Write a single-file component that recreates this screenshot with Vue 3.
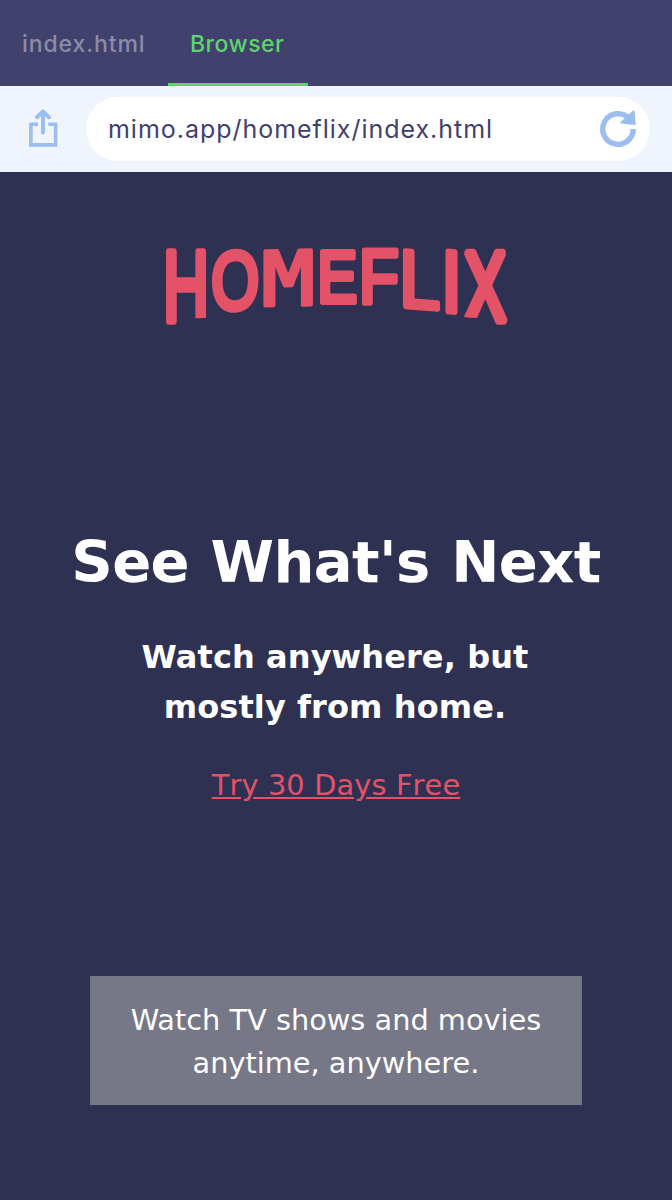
<script setup>
// Glyph extents are in font units (2048 per em); each box is the letter's place in the wordmark.
const stroke = 4.8
const letters = [
  { ch: 'H', g: [168, 1311], x: [166, 206], y: [249, 325], skew: 0, clip: 'url(#h-foot)' },
  { ch: 'O', g: [97, 1495], x: [212, 258.5], y: [249.5, 312], skew: -0.04 },
  { ch: 'M', g: [86, 1145], x: [263.5, 313], y: [248.8, 307], skew: -0.02, wide: true },
  { ch: 'E', g: [168, 1278], x: [320, 357], y: [248.8, 305], skew: 0 },
  { ch: 'F', g: [168, 1150], x: [362, 398], y: [248.5, 306], skew: 0 },
  { ch: 'L', g: [168, 1078], x: [403, 440.5], y: [249.5, 310.5], skew: 0.08 },
  { ch: 'I', g: [189, 380], x: [445.5, 457.5], y: [248.8, 314.5], skew: 0.08 },
  { ch: 'X', g: [46, 1321], x: [463, 507], y: [249.4, 325], skew: 0, clip: 'url(#x-foot)' },
].map((l) => {
  const u = 100 / 2048
  const sw = l.ch === 'X' ? 6 : l.wide ? 4 : stroke
  const a = (l.x[1] - l.x[0] - sw) / ((l.g[1] - l.g[0]) * u)
  const line = sw / a
  const cap = l.wide ? 72.9 : 68.8
  const d = (l.y[1] - l.y[0]) / (cap + line)
  const b = l.skew * a
  const mid = ((l.g[0] + l.g[1]) / 2) * u
  const e = l.x[0] + sw / 2 - l.g[0] * u * a
  const f = l.y[1] - (line * d) / 2 - b * mid
  return { ch: l.ch, clip: l.clip, wide: l.wide, line, m: `matrix(${a} ${b} 0 ${d} ${e} ${f})` }
})
</script>

<template>
  <div class="screen">
    <nav class="tabs">
      <div class="tab file">index.html</div>
      <div class="tab active"><span>Browser</span></div>
    </nav>
    <div class="toolbar">
      <svg class="share" width="30" height="40" viewBox="28 109 30 40">
        <path d="M38 124.2H30.9V144.9H55.6V124.2H48.2" fill="none" stroke="#9bbdf0" stroke-width="3.6" />
        <path d="M43 132.5V112M37 117.2L43 111.4L49 117.2" fill="none" stroke="#9bbdf0" stroke-width="4" stroke-linecap="round" stroke-linejoin="round" />
      </svg>
      <div class="address">
        <span class="url">mimo.app/homeflix/index.html</span>
        <svg class="reload" width="38" height="40" viewBox="599 109 38 40">
          <path d="M633.3 129A15.3 15.3 0 1 1 629.4 118.8" fill="none" stroke="#9bbdf0" stroke-width="5.4" />
          <path d="M633.6 111.4L634.8 124L621.4 122.6Z" fill="#9bbdf0" stroke="#9bbdf0" stroke-width="2" stroke-linejoin="round" />
        </svg>
      </div>
    </div>
    <main class="page">
      <svg class="logo" width="344" height="80" viewBox="165 247 344 80">
        <defs>
          <clipPath id="h-foot"><path d="M160 240H215V317.6L190 318.5V323L172 330H160Z" /></clipPath>
          <clipPath id="x-foot"><path d="M455 240H515V330H498L486 318.5L455 316.5Z" /></clipPath>
        </defs>
        <g v-for="l in letters" :key="l.ch" :clip-path="l.clip">
          <text class="letter" :class="{ wide: l.wide }" :transform="l.m" :stroke-width="l.line">{{ l.ch }}</text>
        </g>
      </svg>
      <h1>See What's Next</h1>
      <h2>Watch anywhere, but<br />mostly from home.</h2>
      <a class="trial">Try 30 Days Free</a>
      <p class="note">Watch TV shows and movies<br />anytime, anywhere.</p>
    </main>
  </div>
</template>

<style>
body {
  margin: 0;
  background: #2f3152;
}
</style>

<style scoped>
.screen {
  width: 672px;
  height: 1200px;
  overflow: hidden;
  background: #2f3152;
  display: flex;
  flex-direction: column;
}
.tabs {
  height: 86px;
  box-sizing: border-box;
  background: #41416e;
  display: flex;
  font: 500 23px/88px Inter, sans-serif;
}
.tab {
  box-sizing: border-box;
  height: 86px;
  white-space: nowrap;
}
.file {
  width: 168px;
  padding-left: 22px;
  letter-spacing: 0.9px;
  color: #8b8ca6;
}
.active {
  width: 140px;
  padding-left: 22px;
  color: #5fd46c;
  letter-spacing: 0.5px;
  border-bottom: 3px solid #5fd46c;
}
.toolbar {
  height: 86px;
  box-sizing: border-box;
  padding: 0 22px 0 28px;
  background: #f0f5fd;
  display: flex;
  align-items: center;
}
.share {
  margin-right: 28px;
  flex: none;
}
.address {
  flex: 1;
  height: 64px;
  box-sizing: border-box;
  padding: 0 13px 0 22px;
  border-radius: 32px;
  background: #fff;
  display: flex;
  align-items: center;
  justify-content: space-between;
}
.url {
  font: 400 25px/64px Inter, sans-serif;
  letter-spacing: 0.97px;
  color: #41416e;
  white-space: nowrap;
}
.page {
  flex: 1;
  display: flex;
  flex-direction: column;
  align-items: center;
  padding-top: 75px;
  font-family: Verdana, "DejaVu Sans", sans-serif;
  color: #fff;
  text-align: center;
  white-space: nowrap;
}
.logo {
  display: block;
  margin-left: 2px;
  overflow: visible;
}
.letter {
  font: 400 100px "Liberation Sans", sans-serif;
  fill: #e45268;
  stroke: #e45268;
  stroke-linejoin: round;
}
.letter.wide {
  font-family: "DejaVu Sans Mono", monospace;
}
h1 {
  margin: 193px 0 0;
  font-size: 57.6px;
  line-height: 86px;
  letter-spacing: -0.6px;
  word-spacing: 2px;
}
h2 {
  margin: 26px 0 0;
  font-size: 32px;
  line-height: 50px;
  letter-spacing: 0.1px;
  position: relative;
  left: -1px;
}
.trial {
  margin-top: 32px;
  font-size: 28.8px;
  line-height: 43px;
  letter-spacing: 0.15px;
  font-kerning: none;
  color: #e45268;
  text-decoration: underline;
}
.note {
  margin: 169px 0 0;
  width: 492px;
  height: 129px;
  box-sizing: border-box;
  padding: 23px 0 20px;
  background: #767787;
  font-size: 28.8px;
  line-height: 43px;
}
</style>
